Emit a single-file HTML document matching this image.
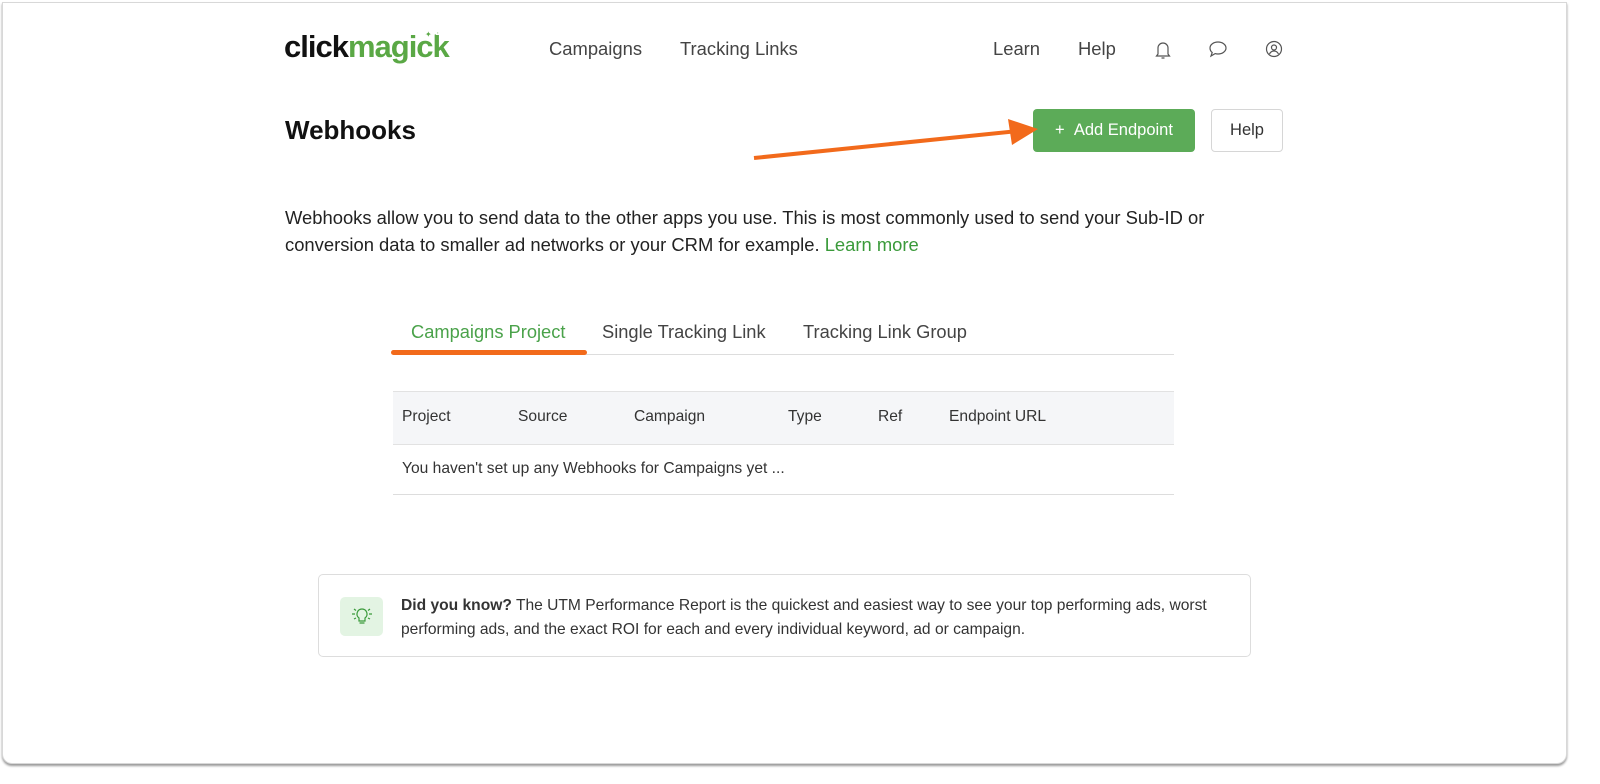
<!DOCTYPE html>
<html><head><style>
body{margin:0;width:1600px;height:784px;background:#fff;font-family:"Liberation Sans",sans-serif;position:relative;overflow:hidden;color:#222}
.frame{position:absolute;left:2px;top:2px;width:1563px;height:760px;border:1px solid #d8d8d8;border-radius:0 0 10px 10px;box-shadow:0 2px 2px #999;background:#fff}
.a{position:absolute;white-space:nowrap}
.nav{font-size:18.4px;color:#444;top:38px}
.th{font-size:15.6px;color:#333;top:408px}
</style></head><body>
<div class="frame"></div>
<div class="a" style="left:284px;top:29px;font-size:31px;font-weight:bold;letter-spacing:-1px"><span style="color:#111">click</span><span style="color:#5aa845">magick</span></div>
<div class="a" style="left:425px;top:30px;color:#5aa845;font-size:8px">✦ ·:</div>
<div class="a nav" style="left:549px">Campaigns</div>
<div class="a nav" style="left:680px">Tracking Links</div>
<div class="a nav" style="left:993px">Learn</div>
<div class="a nav" style="left:1078px">Help</div>
<svg class="a" style="left:1154px;top:40px" width="18" height="20" viewBox="0 0 18 20" fill="none" stroke="#555" stroke-width="1.2"><path d="M4 14V8a5 5 0 0 1 10 0v6l1.5 2h-13z M7.5 18h3"/></svg>
<svg class="a" style="left:1208px;top:40px" width="20" height="18" viewBox="0 0 20 18" fill="none" stroke="#555" stroke-width="1.2"><path d="M10 2c4.4 0 8 2.7 8 6s-3.6 6-8 6c-1 0-2-.1-2.9-.4L3 16l1.2-3.5C2.8 11.4 2 9.8 2 8c0-3.3 3.6-6 8-6z"/></svg>
<svg class="a" style="left:1265px;top:40px" width="18" height="18" viewBox="0 0 18 18" fill="none" stroke="#555" stroke-width="1.2"><circle cx="9" cy="9" r="7.5"/><circle cx="9" cy="7.5" r="2.5"/><path d="M4.5 14c1-2 2.5-3 4.5-3s3.5 1 4.5 3"/></svg>
<div class="a" style="left:285px;top:115px;font-size:26px;font-weight:bold;color:#111">Webhooks</div>
<div class="a" style="left:1033px;top:109px;width:162px;height:43px;background:#5cab58;border-radius:4px;color:#fff;font-size:16.5px;line-height:43px;text-align:center">+ &nbsp;Add Endpoint</div>
<div class="a" style="left:1211px;top:109px;width:70px;height:41px;border:1px solid #d6d6d6;border-radius:4px;font-size:16.5px;line-height:41px;text-align:center;color:#333">Help</div>
<svg class="a" style="left:750px;top:115px" width="290" height="48"><path d="M4 43 L268 16" stroke="#f26a1b" stroke-width="4"/><path d="M258 4 L288 14 L262 30 Z" fill="#f26a1b"/></svg>
<div class="a" style="left:285px;top:204px;font-size:18.4px;line-height:27px;color:#222">Webhooks allow you to send data to the other apps you use. This is most commonly used to send your Sub-ID or<br>conversion data to smaller ad networks or your CRM for example. <span style="color:#3a9a3a">Learn more</span></div>
<div class="a" style="left:411px;top:321px;font-size:18.3px;color:#4aa24a">Campaigns Project</div>
<div class="a" style="left:602px;top:321px;font-size:18.3px;color:#444">Single Tracking Link</div>
<div class="a" style="left:803px;top:321px;font-size:18.3px;color:#444">Tracking Link Group</div>
<div class="a" style="left:393px;top:354px;width:781px;height:1px;background:#ddd"></div>
<div class="a" style="left:391px;top:350px;width:196px;height:5px;background:#f26a1b;border-radius:3px"></div>
<div class="a" style="left:393px;top:391px;width:781px;height:52px;background:#f5f6f8;border-top:1px solid #e2e2e2;border-bottom:1px solid #e2e2e2"></div>
<div class="a th" style="left:402px">Project</div>
<div class="a th" style="left:518px">Source</div>
<div class="a th" style="left:634px">Campaign</div>
<div class="a th" style="left:788px">Type</div>
<div class="a th" style="left:878px">Ref</div>
<div class="a th" style="left:949px">Endpoint URL</div>
<div class="a" style="left:402px;top:460px;font-size:15.6px;color:#333">You haven't set up any Webhooks for Campaigns yet ...</div>
<div class="a" style="left:393px;top:494px;width:781px;height:1px;background:#ddd"></div>
<div class="a" style="left:318px;top:574px;width:931px;height:81px;border:1px solid #ddd;border-radius:5px"></div>
<div class="a" style="left:340px;top:597px;width:43px;height:39px;background:#e3f4e3;border-radius:5px"></div>
<svg class="a" style="left:350px;top:605px" width="24" height="22" fill="none" stroke="#3a9a3a" stroke-width="1.2"><path d="M12 4a5 5 0 0 0-3 9v3h6v-3a5 5 0 0 0-3-9z M9.5 18h5"/><path d="M2 9h3M19 9h3M4 4l2 1.5M20 4l-2 1.5M4 14l2-1M20 14l-2-1"/></svg>
<div class="a" style="left:401px;top:594px;font-size:15.6px;line-height:24px;color:#333"><b>Did you know?</b> The UTM Performance Report is the quickest and easiest way to see your top performing ads, worst<br>performing ads, and the exact ROI for each and every individual keyword, ad or campaign.</div>
</body></html>
